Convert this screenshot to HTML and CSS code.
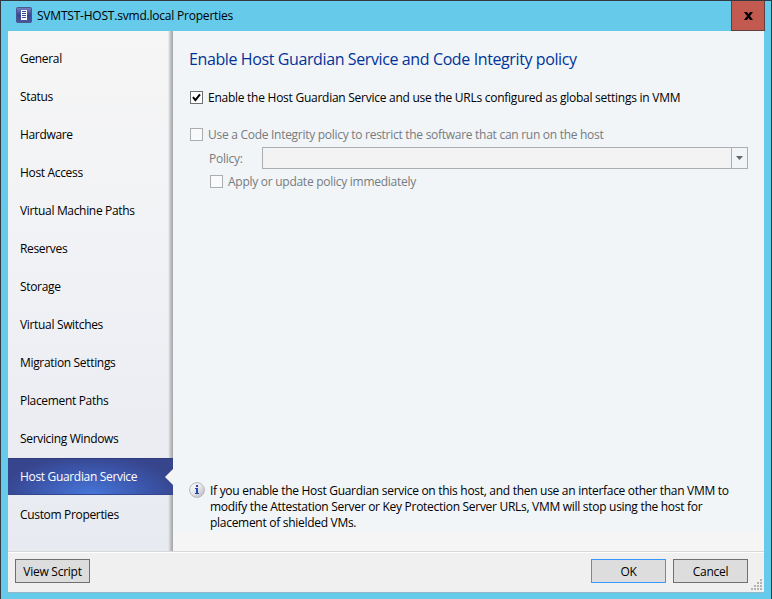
FILE: index.html
```html
<!DOCTYPE html>
<html lang="en">
<head>
<meta charset="utf-8">
<title>SVMTST-HOST.svmd.local Properties</title>
<link rel="stylesheet" href="styles.css">
</head>
<body>
<div class="window">
  <header class="titlebar">
    <svg class="app-icon" width="16" height="16" viewBox="0 0 16 16">
      <defs><linearGradient id="app" x1="0" y1="0" x2="0" y2="1"><stop offset="0" stop-color="#7884c0"/><stop offset=".5" stop-color="#39458f"/><stop offset="1" stop-color="#4a589c"/></linearGradient></defs>
      <rect x=".5" y=".5" width="15" height="15" rx="1" fill="url(#app)" stroke="#4a568f"/>
      <rect x="5" y="3" width="6" height="10" fill="#fff"/>
      <path d="M6 4.500h4M6 6.500h4M6 8.500h4M6 10.500h4" stroke="#39458f"/>
    </svg>
    <h1 class="caption"><span>SVMTST-HOST.svmd.local Properties</span></h1>
    <button class="close" aria-label="Close"><svg width="9" height="8" viewBox="0 0 9 8"><path d="M0 0h3l1.500 2.300L6 0h3L6 4l3 4H6L4.500 5.700 3 8H0l3-4z" fill="#000"/></svg></button>
  </header>
  <div class="client">
    <div class="body">
      <nav class="sidebar">
        <a class="item"><span>General</span></a>
        <a class="item"><span>Status</span></a>
        <a class="item"><span>Hardware</span></a>
        <a class="item"><span>Host Access</span></a>
        <a class="item"><span>Virtual Machine Paths</span></a>
        <a class="item"><span>Reserves</span></a>
        <a class="item"><span>Storage</span></a>
        <a class="item"><span>Virtual Switches</span></a>
        <a class="item"><span>Migration Settings</span></a>
        <a class="item"><span>Placement Paths</span></a>
        <a class="item"><span>Servicing Windows</span></a>
        <a class="item selected"><span>Host Guardian Service</span></a>
        <a class="item"><span>Custom Properties</span></a>
      </nav>
      <main class="page">
        <h2 class="heading"><span>Enable Host Guardian Service and Code Integrity policy</span></h2>
        <label class="check enable">
          <svg class="box" width="13" height="13" viewBox="0 0 13 13"><rect x=".5" y=".5" width="12" height="12" fill="#fff" stroke="#707070"/><path d="M3 6.200 5.400 9.200 10 3.300" fill="none" stroke="#000" stroke-width="2"/></svg>
          <span>Enable the Host Guardian Service and use the URLs configured as global settings in VMM</span>
        </label>
        <label class="check restrict disabled">
          <svg class="box" width="13" height="13" viewBox="0 0 13 13"><rect x=".5" y=".5" width="12" height="12" fill="#f8fafb" stroke="#abadaf"/></svg>
          <span>Use a Code Integrity policy to restrict the software that can run on the host</span>
        </label>
        <div class="policy disabled">
          <span class="policy-label">Policy:</span>
          <div class="combo"><div class="arrow"><svg width="7" height="4" viewBox="0 0 7 4"><path d="M0 0h7L3.500 4z" fill="#666"/></svg></div></div>
        </div>
        <label class="check apply disabled">
          <svg class="box" width="13" height="13" viewBox="0 0 13 13"><rect x=".5" y=".5" width="12" height="12" fill="#f8fafb" stroke="#abadaf"/></svg>
          <span>Apply or update policy immediately</span>
        </label>
        <div class="note">
          <svg class="info" width="16" height="16" viewBox="0 0 16 16">
            <defs><linearGradient id="ball" x1="0" y1="0" x2="1" y2="1"><stop offset="0" stop-color="#fff"/><stop offset=".5" stop-color="#e6e6e8"/><stop offset="1" stop-color="#b5b5b8"/></linearGradient></defs>
            <circle cx="8" cy="8" r="7.400" fill="url(#ball)" stroke="#b6b6b8"/>
            <path d="M7 3h2v2H7zM6 6h3v5h1v1H6v-1h1V7H6z" fill="#2448b4"/>
          </svg>
          <p><span>If you enable the Host Guardian service on this host, and then use an interface other than VMM to</span><br><span>modify the Attestation Server or Key Protection Server URLs, VMM will stop using the host for</span><br><span>placement of shielded VMs.</span></p>
        </div>
      </main>
    </div>
    <footer class="footer">
      <button class="button"><span>View Script</span></button>
      <button class="button ok"><span>OK</span></button>
      <button class="button"><span>Cancel</span></button>
      <svg class="grip" width="11" height="11" viewBox="0 0 11 11"><path d="M9 0h2v2H9zM6 3h2v2H6zM9 3h2v2H9zM3 6h2v2H3zM6 6h2v2H6zM9 6h2v2H9zM0 9h2v2H0zM3 9h2v2H3zM6 9h2v2H6zM9 9h2v2H9z" fill="#b4b4b4"/></svg>
    </footer>
  </div>
</div>
</body>
</html>
```
FILE: styles.css
```css
* { box-sizing: border-box; }
body {
  margin: 0;
  font: 12px/16px "Open Sans", "Noto Sans", sans-serif;
  letter-spacing: -0.26px;
  color: #000;
}
h1, h2, p { margin: 0; font-weight: 400; }
span { white-space: nowrap; }
button { font: inherit; letter-spacing: inherit; color: #000; padding: 0; }
svg { display: block; flex: none; }

.window {
  width: 772px;
  height: 599px;
  display: flex;
  flex-direction: column;
  padding: 0 7px 6px;
  background: #66caea;
  border: 1px solid #333940;
  border-bottom: 0;
}
.titlebar { height: 30px; display: flex; padding-left: 8px; flex: none; }
.app-icon { margin-top: 6px; }
.caption { flex: 1; font-size: 12px; line-height: 16px; letter-spacing: -0.21px; padding: 7px 0 0 5px; }
.close {
  width: 34px;
  height: 30px;
  margin-right: -1px;
  display: flex;
  align-items: center;
  justify-content: center;
  background: #c35a50;
  border: 1px solid #5d413f;
  border-top: 0;
}
.client {
  flex: 1;
  display: flex;
  flex-direction: column;
  border-bottom: 1px solid #91b8c7;
  background: #f0f0f0;
}
.body { height: 520px; display: flex; }
.sidebar {
  width: 165px;
  padding-top: 9px;
  letter-spacing: -0.33px;
  background: linear-gradient(90deg, transparent 160px, #dcdee0 161px, #b8babd 163px, #a4a6a9 165px), linear-gradient(#f6f6f6, #f0f1f5 50%, #e7eaf0);
}
.item { display: flex; align-items: center; height: 37px; margin-bottom: 1px; padding: 1px 0 0 12px; }
.selected {
  color: #fff;
  background: radial-gradient(ellipse 90px 40px at 50% 100%, #4777d9, #3b55aa 65%, #37458c);
  box-shadow: inset 0 1px #2e3b7c, inset 0 -1px #33458f;
  justify-content: space-between;
}
.selected::after {
  content: "";
  width: 8px;
  height: 16px;
  background: #f4f5f6;
  clip-path: polygon(100% 0, 0 50%, 100% 100%);
}
.page { flex: 1; display: flex; flex-direction: column; background: #f1f5f8; padding: 17px 16px 0; }
.heading { font-size: 16px; line-height: 22px; letter-spacing: -0.39px; color: #003399; }
.check { display: flex; height: 16px; gap: 5px; padding-left: 1px; }
.box { margin-top: 1px; }
.enable { margin-top: 20px; }
.restrict { margin-top: 21px; letter-spacing: -0.28px; }
.disabled { color: #777b80; }
.policy { display: flex; align-items: center; margin: 4px 0 0 20px; height: 22px; }
.policy-label { width: 53px; padding-top: 1px; }
.combo { flex: 1; height: 22px; border: 1px solid #abadb3; background: #f3f3f3; display: flex; justify-content: flex-end; }
.arrow { width: 16px; border-left: 1px solid #abadb3; background: #f1f5f8; display: flex; align-items: center; justify-content: center; }
.apply { margin: 5px 0 0 20px; letter-spacing: -0.27px; }
.note { display: flex; gap: 5px; margin: auto -16px 0 -16px; height: 70px; padding: 1px 0 0 16px; letter-spacing: -0.29px; background: linear-gradient(transparent 51px, #f5f5f5 51px); }
.note p { padding-top: 1px; }
.footer { flex: 1; display: flex; align-items: flex-start; padding: 7px 2px 0 7px; border-top: 1px solid #d8d8d8; box-shadow: inset 0 1px #fff; }
.button { width: 75px; height: 24px; border: 1px solid #707070; background: #ddd; margin-right: 3px; padding-top: 1px; }
.ok { border-color: #3399ff; margin-left: auto; margin-right: 7px; }
.grip { align-self: flex-end; margin-bottom: 2px; }
```
